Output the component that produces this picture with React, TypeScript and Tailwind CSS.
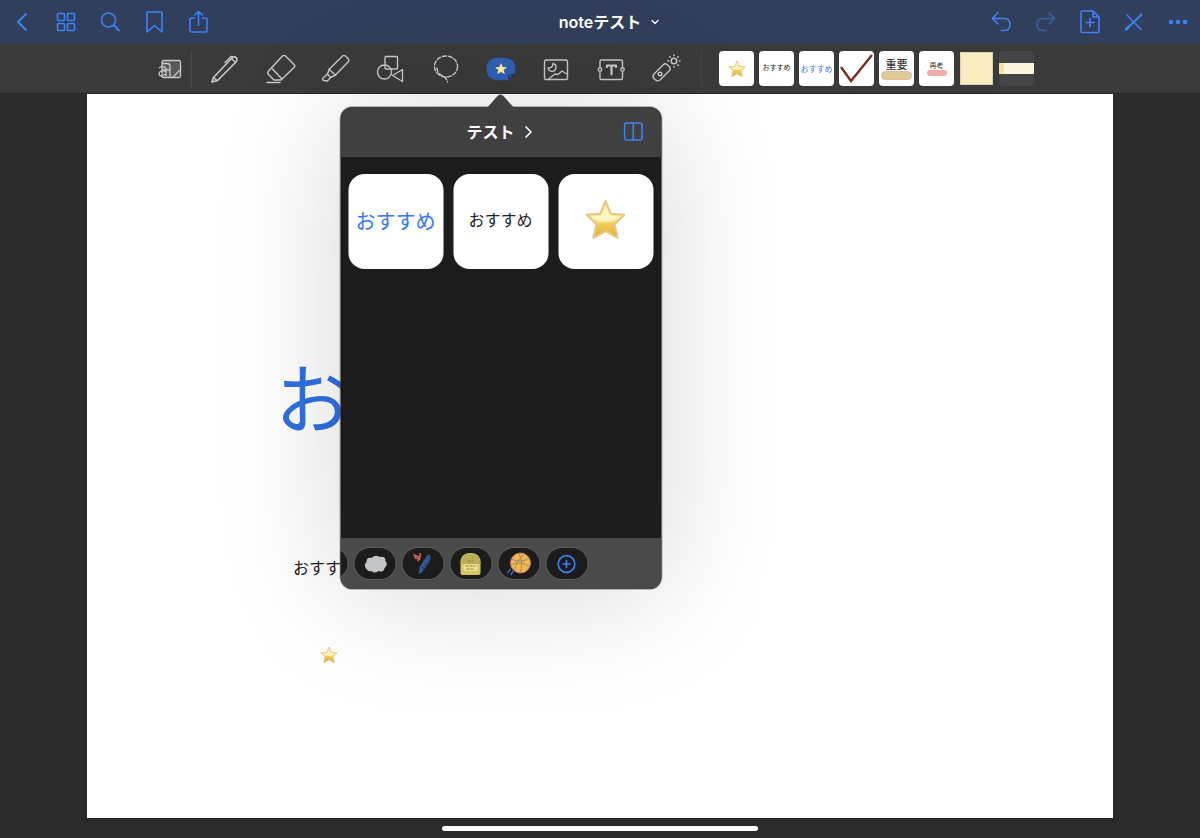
import type { ReactNode } from "react";
import {
  ChevronDown,
  ChevronLeft,
  ChevronRight,
  CirclePlus,
  Ellipsis,
  Search,
} from "lucide-react";

function Star({ className }: { className: string }) {
  return (
    <svg viewBox="0 0 40 40" className={className} aria-hidden="true">
      <defs>
        <linearGradient id="gold" x1="0" y1="0" x2="0" y2="1">
          <stop offset="0" stopColor="#f3dc8c" />
          <stop offset="0.45" stopColor="#fdf0a0" />
          <stop offset="0.62" stopColor="#f2cf55" />
          <stop offset="1" stopColor="#dca83e" />
        </linearGradient>
      </defs>
      <path
        d="M20 2 L25 14 L38 15 L28.500 24 L31.500 37 L20 30.500 L8.500 37 L11.500 24 L2 15 L15 14 Z"
        fill="url(#gold)"
        stroke="#e6c680"
        strokeWidth="2"
        strokeLinejoin="round"
      />
      <path d="M20 6 L24 16 L34 17 L26 22 L14 22 L6 17 L16 16 Z" fill="#fffbe0" opacity="0.6" />
    </svg>
  );
}

function ToolIcon({ children }: { children: ReactNode }) {
  return (
    <svg
      viewBox="0 0 30 30"
      className="size-[30px]"
      fill="none"
      stroke="#c9c9c9"
      strokeWidth="1.400"
      strokeLinecap="round"
      strokeLinejoin="round"
      aria-hidden="true"
    >
      {children}
    </svg>
  );
}

function NavButton({ label, children }: { label: string; children: ReactNode }) {
  return (
    <button aria-label={label} className="flex h-11 w-11 items-center justify-center">
      {children}
    </button>
  );
}

function NavIcon({ children }: { children: ReactNode }) {
  return (
    <svg
      viewBox="0 0 24 24"
      className="size-6"
      fill="none"
      stroke="currentColor"
      strokeWidth="1.600"
      strokeLinecap="round"
      strokeLinejoin="round"
      aria-hidden="true"
    >
      {children}
    </svg>
  );
}

const toolsBefore = [
  {
    label: "ペン",
    icon: (
      <>
        <path d="M1 28 L2.500 23.500 L20.500 4.500 Q23 2 25 3.500 Q27 5 25 8 L6.500 26.500 Z" strokeWidth="1.600" />
        <path d="M2.500 23.500 L6 26.500 M20.500 4.500 L24.500 8.500 M22 3 L20 2.500 L14 8.500" />
      </>
    ),
  },
  {
    label: "消しゴム",
    icon: (
      <>
        <path d="M16.500 2 Q18 .8 19.500 2 L28 10.500 Q29.500 12 28 13.500 L15 26 H8 L2.500 20.500 Q1 19 2.500 17 Z" />
        <path d="M5.500 14 L16 25 M1 28.500 H14" />
      </>
    ),
  },
  {
    label: "蛍光ペン",
    icon: (
      <>
        <path d="M8 15.500 L21.500 2 Q23 .8 24.500 2 L27 4.500 Q28.500 6 27.500 7.500 L14.500 21 Z" />
        <path d="M8 15.500 L6.500 20 L9.500 23.500 L14.500 21 M6.500 20 L2 24 Q1 26 3 26.500 L6.500 27 L9.500 23.500" />
      </>
    ),
  },
  {
    label: "図形",
    icon: (
      <>
        <rect x="9" y="2.500" width="12.500" height="12.500" rx="1" />
        <circle cx="8.500" cy="18" r="7" />
        <path d="M16.500 21.500 L26.500 15.500 V27.500 Z" />
      </>
    ),
  },
  {
    label: "なげなわ",
    icon: (
      <>
        <ellipse cx="15" cy="12.500" rx="11.500" ry="10.500" strokeDasharray="4 2" />
        <path d="M6 14 Q6 19 11 21.500 Q15.500 23.500 16.500 28" strokeDasharray="4 2" />
      </>
    ),
  },
];

const toolsAfter = [
  {
    label: "画像",
    icon: (
      <>
        <rect x="3.500" y="6" width="23" height="19.500" rx="1.500" />
        <path d="M12 9.500 A4 4 0 1 1 7 14 Q11.500 14.500 12 9.500 Z M7.500 25 L14 20 L17 20.500 L21 17 L26 20" />
      </>
    ),
  },
  {
    label: "テキスト",
    icon: (
      <>
        <path d="M4 12.500 V7.500 Q4 6 5.500 6 H25 Q26.500 6 26.500 7.500 V12.500 M26.500 18.500 V24 Q26.500 25.500 25 25.500 H5.500 Q4 25.500 4 24 V18.500" />
        <circle cx="4" cy="15.500" r="1.700" />
        <circle cx="26.500" cy="15.500" r="1.700" />
        <path d="M11 13 V11.500 H20 V13 M15.500 11.500 V20.500" strokeWidth="2.200" />
      </>
    ),
  },
  {
    label: "レーザーポインタ",
    icon: (
      <>
        <path d="M3 20 L12.500 10.500 Q14 9 16 10.500 L18.500 13 Q20 15 18.500 16.500 L9 26 Q6.500 28 4 25.500 L3 24.500 Q1 22.500 3 20 Z" />
        <circle cx="9" cy="20" r="1.800" />
        <circle cx="23" cy="7" r="2.800" />
        <path d="M23 1 V1.600 M23 12.500 V13 M17 7 H17.600 M28.500 7 H29 M18.800 2.800 L19.200 3.200 M27 11 L27.400 11.400 M27.200 2.800 L26.800 3.200" strokeWidth="1.600" />
      </>
    ),
  },
];

function Tool({ label, icon }: { label: string; icon: ReactNode }) {
  return (
    <button aria-label={label} className="flex h-full w-[55px] items-center justify-center">
      <ToolIcon>{icon}</ToolIcon>
    </button>
  );
}

function Header() {
  return (
    <header className="grid h-11 grid-cols-[1fr_auto_1fr] bg-[#323f5c] text-[#3b82f6]">
      <nav className="flex">
        <NavButton label="戻る">
          <ChevronLeft className="size-8" strokeWidth={1.5} />
        </NavButton>
        <NavButton label="サムネール">
          <NavIcon>
            <rect x="3.500" y="3.500" width="7" height="7" rx="1" />
            <rect x="13.500" y="3.500" width="7" height="7" rx="1" />
            <rect x="3.500" y="13.500" width="7" height="7" rx="1" />
            <rect x="13.500" y="13.500" width="7" height="7" rx="1" />
          </NavIcon>
        </NavButton>
        <NavButton label="検索">
          <NavIcon>
            <circle cx="10.500" cy="10" r="7" />
            <path d="M15.500 15 L21 20.500" strokeWidth="2" />
          </NavIcon>
        </NavButton>
        <NavButton label="ブックマーク">
          <NavIcon>
            <path d="M5 3 Q5 2 6 2 H19 Q20 2 20 3 V22 L12.500 15.500 L5 22 Z" />
          </NavIcon>
        </NavButton>
        <NavButton label="共有">
          <NavIcon>
            <path d="M8.500 8 H5.500 Q4 8 4 9.500 V20.500 Q4 22 5.500 22 H19.500 Q21 22 21 20.500 V9.500 Q21 8 19.500 8 H16.500 M12.500 15 V1.500 M8.500 5 L12.500 1.500 L16.500 5" />
          </NavIcon>
        </NavButton>
      </nav>

      <button className="flex items-center gap-2 pl-5 text-base font-semibold text-white">
        noteテスト
        <ChevronDown className="size-3" strokeWidth={2.5} />
      </button>

      <div className="flex justify-end">
        <NavButton label="取り消す">
          <NavIcon>
            <path d="M8 2.500 L2.500 8.500 L8 14 M2.500 8.500 H14 Q20 8.500 20 14.500 Q20 20.500 14 20.500 H11.500" />
          </NavIcon>
        </NavButton>
        <button
          aria-label="やり直す"
          disabled
          className="flex h-11 w-11 items-center justify-center opacity-50"
        >
          <NavIcon>
            <path d="M15 3 L20.500 8.500 L15 14 M20.500 8.500 H9 Q3 8.500 3 14.500 Q3 20.500 9 20.500 H12" />
          </NavIcon>
        </button>
        <NavButton label="ページを追加">
          <NavIcon>
            <path d="M4.500 1 H15 L21 7 V21 Q21 22.500 19.500 22.500 H4.500 Q3 22.500 3 21 V2.500 Q3 1 4.500 1 Z M15 1 V7 H21 M12 8.500 V16.500 M8 12.500 H16" />
          </NavIcon>
        </NavButton>
        <NavButton label="編集モード">
          <NavIcon>
            <path d="M5 5 L19 19.500" />
            <path d="M4 19.500 L6.500 17 M18.500 5.500 L19 5" strokeWidth="2.600" />
            <path d="M6.500 17 L17 7" strokeWidth="2" />
          </NavIcon>
        </NavButton>
        <NavButton label="その他">
          <Ellipsis className="size-6" strokeWidth={2.6} />
        </NavButton>
      </div>
    </header>
  );
}

function Popover() {
  return (
    <div className="absolute left-1/2 top-full z-10 mt-[14px] w-[321px] -translate-x-1/2 rounded-xl shadow-[0_4px_130px_rgba(0,0,0,0.16)]">
      <svg
        viewBox="0 0 32 14"
        className="absolute bottom-full left-1/2 -mb-px h-[14px] w-8 -translate-x-1/2"
        aria-hidden="true"
      >
        <path d="M0 14 Q4 13 6 10 L13 2 Q16 -1 19 2 L26 10 Q28 13 32 14 Z" fill="#404040" />
      </svg>

      <div className="overflow-hidden rounded-xl bg-[#1c1c1c] ring-1 ring-[#555]/40">
        <div className="grid h-[50px] grid-cols-[1fr_auto_1fr] items-center bg-[#404040] px-[18px]">
          <button className="col-start-2 flex items-center gap-1 pl-1 text-base font-semibold text-white">
            テスト
            <ChevronRight className="size-5" strokeWidth={2} />
          </button>
          <button aria-label="分割表示" className="justify-self-end text-[#3b82f6]">
            <svg viewBox="0 0 20 20" className="size-5" fill="none" stroke="currentColor" strokeWidth="1.600" aria-hidden="true">
              <rect x="1" y="1" width="17.500" height="17" rx="2.500" />
              <path d="M9.750 1 V18" />
            </svg>
          </button>
        </div>

        <div className="grid h-[381px] grid-cols-3 content-start gap-[10px] px-2 pt-[17px]">
          <button className="flex h-[95px] items-center justify-center rounded-2xl bg-white text-xl text-[#3478f0]">
            おすすめ
          </button>
          <button className="flex h-[95px] items-center justify-center rounded-2xl bg-white pb-1 text-base text-[#222]">
            おすすめ
          </button>
          <button aria-label="星" className="flex h-[95px] items-center justify-center rounded-2xl bg-white pb-1">
            <Star className="size-[42px]" />
          </button>
        </div>

        {/* コレクション切り替え */}
        <div className="h-[51px] overflow-hidden bg-[#4a4a4a]">
          <div className="-ml-[34px] flex h-full items-center gap-[7px]">
            <Collection label="前のコレクション" />
            <Collection label="ふきだし">
              <path d="M5 18 Q0 14 4 10 Q4 5 9 6 Q13 2 17 5 Q23 4 23 9 Q26 13 22 16 Q21 21 16 19 Q12 22 9 19 Q6 20 5 18 Z" fill="#c4c5c8" />
            </Collection>
            <Collection label="文房具">
              <path d="M8 22 L9 15 L16 4 Q19 1 20 4 Q21 6 19 9 L12 20 Z" fill="#35548f" />
              <path d="M11 15 L15 18 M14 12 L17 14" stroke="#1f2f50" />
              <path d="M10 6 L4 3 L5 6 L9 7 L10 1 M9 7 L7 9" stroke="#c8655b" fill="none" strokeWidth="1.600" />
            </Collection>
            <Collection label="日記">
              <path d="M2 21 V11 Q2 1 12 1 Q22 1 22 11 V21 Q22 23 20 23 H4 Q2 23 2 21 Z" fill="#d8c765" />
              <path d="M2 12 V11 Q2 1 12 1 Q22 1 22 11 V12 Z" fill="#bdae5c" />
              <rect x="5" y="12" width="14" height="7" rx="2" fill="#eee092" />
              <path d="M7 14 H17 M8 17 H16 M9 9 H15" stroke="#8c7c35" strokeDasharray="3 1" />
            </Collection>
            <Collection label="スポーツ">
              <circle cx="14" cy="11" r="10" fill="#efb94f" stroke="#d97768" />
              <path d="M5 7 Q14 12 23 6 M12 1 Q17 9 14 21 M4 13 Q15 8 23 15 M18 2 Q9 9 8 19" stroke="#8f7f70" strokeWidth=".8" fill="none" />
              <path d="M1 21 L4 17 M4 23 L7 19" stroke="#3f68ba" strokeWidth="1.500" />
            </Collection>
            <button
              aria-label="コレクションを追加"
              className="flex h-[31px] w-[41px] shrink-0 items-center justify-center rounded-full bg-[#1c1c1c] text-[#3b82f6] ring-1 ring-[#5c5c5c]"
            >
              <CirclePlus className="size-5" strokeWidth={2} />
            </button>
          </div>
        </div>
      </div>
    </div>
  );
}

function Collection({ label, children }: { label: string; children?: ReactNode }) {
  return (
    <button
      aria-label={label}
      className="flex h-[31px] w-[41px] shrink-0 items-center justify-center rounded-full bg-[#1c1c1c] ring-1 ring-[#5c5c5c]"
    >
      <svg viewBox="0 0 25 24" className="h-6 w-[25px]" aria-hidden="true">
        {children}
      </svg>
    </button>
  );
}

function Recents() {
  return (
    <div className="flex gap-[5px]">
      <button aria-label="星" className="flex size-[35px] items-center justify-center rounded bg-white">
        <Star className="size-[18px]" />
      </button>
      <button className="flex size-[35px] items-center justify-center rounded bg-white text-[7px] text-[#222]">
        おすすめ
      </button>
      <button className="flex size-[35px] items-center justify-center rounded bg-white text-[8px] text-[#3478f0]">
        おすすめ
      </button>
      <button aria-label="チェック" className="size-[35px] rounded bg-white">
        <svg viewBox="0 0 35 35" className="size-[35px]" aria-hidden="true">
          <path d="M2 16 L12 30 L33 4" fill="none" stroke="#7c2b1f" strokeWidth="2.400" />
        </svg>
      </button>
      <button className="flex size-[35px] flex-col items-center rounded bg-white pt-2 text-[11px] leading-3 font-medium text-[#333]">
        重要
        <span className="h-[9px] w-[31px] rounded-full border border-[#f0b3a0] bg-[#dccb92]" />
      </button>
      <button className="flex size-[35px] flex-col items-center rounded bg-white pt-[11px] text-[7px] leading-2 text-[#333]">
        再考
        <span className="h-[6px] w-5 rounded-full bg-[#f3aaa7]" />
      </button>
      <button aria-label="付箋" className="size-[35px] p-px">
        <span className="block h-full border border-[#d9d3b5] bg-[#f8ecc0]" />
      </button>
      <button aria-label="マスキングテープ" className="flex size-[35px] items-center rounded bg-[#454547]">
        <span className="flex h-[11px] w-full bg-[#fcf6dc]">
          <span className="w-[5px] bg-[#f6e3a4]" />
        </span>
      </button>
    </div>
  );
}

function Toolbar() {
  return (
    <div className="flex h-[50px] items-center justify-center border-b border-[#242424] bg-[#3a3a3a] pr-2">
      <button aria-label="ズームウインドウ" className="flex w-6 items-center">
        <svg viewBox="0 0 24 24" className="size-6" fill="none" stroke="#c9c9c9" strokeWidth="1.300" aria-hidden="true">
          <rect x="4" y="3.500" width="18.500" height="17" rx="1.500" fill="#555759" />
          <path d="M4 6.500 H9 Q12 6.500 12 9 V20 M15 20 L22 13 M4 13 H12" />
          <path d="M1 11 Q3 9 6 10 Q8 10 8 13 V19 M8 14 Q1 13 1 17 Q2 21 8 17" />
        </svg>
      </button>
      <div className="ml-[9px] h-9 w-px bg-[#4b4b4b]" />

      <div className="ml-[6px] flex h-full">
        {toolsBefore.map((tool) => (
          <Tool key={tool.label} {...tool} />
        ))}
        <div className="relative h-full w-[55px]">
          <button aria-label="ステッカー" className="flex h-full w-full items-center justify-center">
            <svg viewBox="0 0 30 24" className="h-6 w-[30px]" aria-hidden="true">
              <path d="M11.500 .8 H18.500 Q29.500 1.500 29.500 12 Q29.500 16 27.500 18 L23 22.500 Q21.500 23.200 18.500 23.200 H11.500 Q.5 22.500 .5 12 Q.5 1.500 11.500 .8 Z" fill="#3060b8" />
              <path d="M22.500 22 V19.500 Q22.500 17.500 24.500 17.500 H27.500 Z" fill="#3060b8" stroke="#26334f" />
              <path d="M15 6 L16.700 10 L21 10.300 L17.700 13 L18.800 17.300 L15 15 L11.200 17.300 L12.300 13 L9 10.300 L13.300 10 Z" fill="#fff0a0" />
            </svg>
          </button>
          <Popover />
        </div>
        {toolsAfter.map((tool) => (
          <Tool key={tool.label} {...tool} />
        ))}
      </div>

      <div className="ml-2 mr-[17px] h-9 w-px bg-[#434343]" />
      <Recents />
    </div>
  );
}

export default function App() {
  return (
    <div className="flex min-h-screen flex-col overflow-hidden bg-[#2b2b2b] [font-family:Inter,'Noto_Sans_CJK_JP',sans-serif]">
      <Header />
      <Toolbar />

      {/* ノートのページ */}
      <main className="relative mx-[87px] min-h-[640px] flex-1 bg-white">
        <p className="absolute left-[188px] top-[264px] whitespace-nowrap text-[76px] leading-[84px] text-[#3070e0]">
          おすすめ
        </p>
        <p className="absolute left-[206px] top-[462px] whitespace-nowrap text-base text-[#222]">
          おすすめ
        </p>
        <div className="absolute left-[233px] top-[552px]">
          <Star className="size-[18px]" />
        </div>
      </main>

      <footer className="flex h-5 items-center justify-center">
        <div className="h-[5px] w-[316px] rounded-full bg-white" />
      </footer>
    </div>
  );
}
